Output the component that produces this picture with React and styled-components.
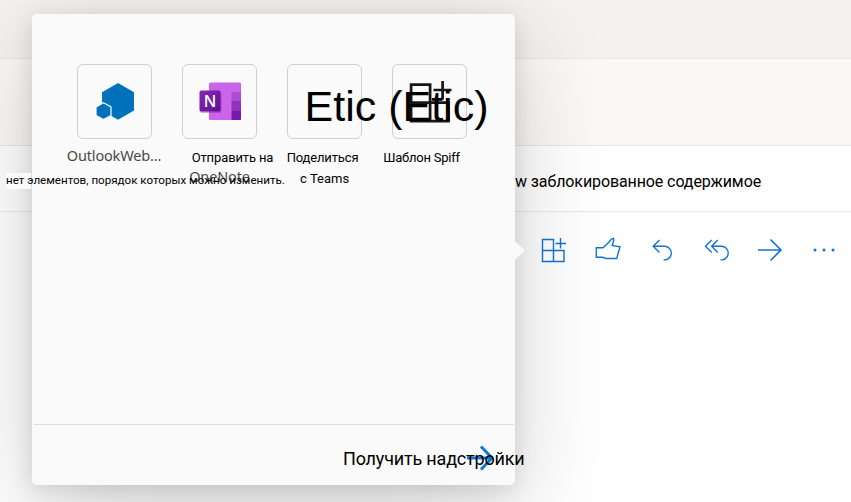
import React from "react";
import styled, { createGlobalStyle } from "styled-components";

const GlobalStyle = createGlobalStyle`
  * { box-sizing: border-box; }
  body { margin: 0; overflow: hidden; background: #fff; }
`;

const Window = styled.main`
  position: relative;
  display: grid;
  grid-template-rows: 59px 87px 66px 1fr;
  width: 851px;
  height: 502px;
  overflow: hidden;
  background: #fff;
  color: #000;
  font-family: Roboto, "Liberation Sans", sans-serif;
`;

const Band = styled.div`
  background: ${(p) => p.$fill};
  border-bottom: 1px solid ${(p) => p.$line};
`;

const Message = styled.div`
  display: flex;
  align-items: center;
  padding: 4px 0 0 515px;
  border-bottom: 1px solid #eaeaea;
`;

const MessageActions = styled.nav`
  display: flex;
  align-items: flex-start;
  gap: 26px;
  padding: 24px 0 0 540px;
`;

const IconButton = styled.button`
  display: flex;
  flex: none;
  width: 28px;
  height: 28px;
  padding: 0;
  border: 0;
  background: none;
  color: #1373d1;
`;

const Glyph = styled.svg`
  display: block;
  width: 28px;
  height: 28px;
  fill: none;
  stroke: currentColor;
  stroke-width: ${(p) => p.$weight || 1.4};
  overflow: visible;
`;

const Popup = styled.section`
  position: absolute;
  left: 32px;
  top: 14px;
  display: flex;
  flex-direction: column;
  width: 483px;
  height: 471px;
  border-radius: 5px;
  background: #fafafa;
  box-shadow: 0 28px 100px rgba(0, 0, 0, 0.18), 0 5px 22px rgba(0, 0, 0, 0.12);
`;

const Pointer = styled.svg`
  position: absolute;
  left: 482px;
  top: 225px;
  width: 11px;
  height: 24px;
`;

const AddinGrid = styled.div`
  display: flex;
  flex: 1;
  padding: 50px 0 0 30px;
`;

const Addin = styled.article`
  display: flex;
  flex-direction: column;
  align-items: center;
  width: 105px;
`;

const Tile = styled.div`
  display: flex;
  align-items: center;
  justify-content: center;
  width: 75px;
  height: 75px;
  border: 1px solid #d0d0d0;
  border-radius: 6px;
`;

const Label = styled.div`
  margin-top: 8px;
  font-size: 13px;
  line-height: 21px;
  text-align: center;
  white-space: nowrap;
`;

const Line = styled.div`
  letter-spacing: ${(p) => p.$track || 0}px;
  transform: translateX(${(p) => p.$shift || 0}px);
`;

const SoftLine = styled(Line)`
  color: #4a4948;
  font-family: "Noto Sans", "Open Sans", sans-serif;
  font-weight: 400;
  font-size: 14.5px;
  line-height: 17px;
`;

const Footer = styled.footer`
  position: relative;
  height: 61px;
  margin: 0 1px 0 2px;
  border-top: 1px solid #dedede;
`;

const FooterArrow = styled.svg`
  position: absolute;
  left: 433px;
  top: 19px;
  width: 28px;
  height: 28px;
  fill: none;
  stroke: #0b7ad8;
  stroke-width: 3;
`;

const FloatingText = styled.span`
  position: absolute;
  left: ${(p) => p.$x}px;
  top: ${(p) => p.$y}px;
  white-space: nowrap;
  font-size: ${(p) => p.$size}px;
  line-height: 1;
  letter-spacing: ${(p) => p.$track || 0}px;
`;

const IconName = styled(FloatingText)`
  font-family: "Liberation Sans", sans-serif;
`;

const Notice = styled(FloatingText)`
  padding: 2px 0;
  background: linear-gradient(90deg, #fafafa 25px, transparent 25px);
`;

const MessageText = styled.span`
  height: 16px;
  background: #fff;
  font-size: 16px;
  line-height: 18px;
  white-space: nowrap;
  letter-spacing: ${(p) => p.$track}px;
`;

const AddinsIcon = () => (
  <Glyph viewBox="0 0 28 28">
    <path d="M2.5 3.5h11v22h-11zM2.5 14.5h21.5v11H2.5M20.5 2v10.5M15.5 7.5H26" />
  </Glyph>
);
const LikeIcon = () => (
  <Glyph viewBox="0 0 28 28">
    <path d="M2.3 11.7H9l6.3-6L17.4 3l2-.6.4 1.9-1.6 5.2 7.8 1.2-3.3 11.8H12l-3.3-1.2H2.3z" />
  </Glyph>
);
const ReplyIcon = () => (
  <Glyph viewBox="0 0 28 28">
    <path d="M11.5 4 5.2 10.3l6.3 6.3M5.5 10.3h10.2a6.8 6.8 0 1 1 0 13.5" />
  </Glyph>
);
const ReplyAllIcon = () => (
  <Glyph viewBox="0 0 28 28">
    <path d="M9.7 4 3.5 10.3l6.2 6.3M15.8 4 9.6 10.3l6.2 6.3M9.9 10.3h8.7a6.8 6.8 0 1 1 0 13.5" />
  </Glyph>
);
const ForwardIcon = () => (
  <Glyph viewBox="0 0 28 28" $weight={1.6}>
    <path d="M2 14h23M14.5 3.5 25 14 14.5 24.5" />
  </Glyph>
);
const MoreIcon = () => (
  <Glyph viewBox="0 0 28 28">
    <g fill="currentColor" stroke="none">
      <circle cx="5" cy="14" r="1.5" />
      <circle cx="14" cy="14" r="1.5" />
      <circle cx="23" cy="14" r="1.5" />
    </g>
  </Glyph>
);

const HexIcon = () => (
  <svg width="44" height="44" viewBox="0 0 44 44">
    <path d="m25 3 16 9.2v18.4l-16 9.2L9 30.6V12.2z" fill="#0072bc" />
    <path d="m10.5 22.7 7.5 4.2v8.5l-7.5 4.2L3 35.4v-8.5z" fill="#0072bc" stroke="#fafafa" strokeWidth="1.2" />
  </svg>
);
const OneNoteIcon = () => (
  <svg width="44" height="44" viewBox="1 1 44 44">
    <defs>
      <linearGradient id="note" x2="1" y2="1">
        <stop stopColor="#8926b7" />
        <stop offset="1" stopColor="#5c1192" />
      </linearGradient>
    </defs>
    <rect x="12" y="3.5" width="32" height="37.5" rx="1.5" fill="#ca64ea" />
    <path d="M34.5 13H44v9h-9.5z" fill="#ae4bd5" />
    <path d="M34.5 22H44v9.5h-9.5z" fill="#9332bf" />
    <path d="M34.5 31.5H44V40a1 1 0 0 1-1 1h-8.5z" fill="#7719aa" />
    <rect x="3.5" y="13" width="21" height="21" rx="1.5" fill="#722094" opacity=".35" />
    <rect x="2.5" y="11.5" width="21" height="21" rx="1.5" fill="url(#note)" />
    <text x="13" y="27.7" textAnchor="middle" fill="#fff" fontFamily="Open Sans, sans-serif" fontWeight="600" fontSize="16">N</text>
  </svg>
);
const SpiffIcon = () => (
  <svg width="44" height="44" viewBox="0 0 44 44" fill="none" stroke="#161616" strokeWidth="2.7">
    <path d="M3.1 4.7h19v36.5h-19zM3.1 22.7h37.4v18.5H3.1" />
    <path d="M34.6 1v18.5M25.5 10h18" />
  </svg>
);

const actions = [
  ["Надстройки", AddinsIcon],
  ["Нравится", LikeIcon],
  ["Ответить", ReplyIcon],
  ["Ответить всем", ReplyAllIcon],
  ["Переслать", ForwardIcon],
  ["Ещё", MoreIcon],
];

export default function App() {
  return (
    <>
      <GlobalStyle />
      <Window>
        <Band $fill="#f3f2f0" $line="#e9e8e7" />
        <Band $fill="#faf9f8" $line="#e8e8e8" />
        <Message>
          <MessageText $track={-0.1}>w заблокированное содержимое</MessageText>
        </Message>
        <MessageActions>
          {actions.map(([name, Icon]) => (
            <IconButton key={name} aria-label={name}><Icon /></IconButton>
          ))}
        </MessageActions>
        <Popup>
          <Pointer viewBox="0 0 11 24">
            <path d="M0 1.5 9.8 10.3q1.2 1.2 0 2.4L0 21.5z" fill="#fafafa" />
          </Pointer>
          <AddinGrid>
            <Addin>
              <Tile><HexIcon /></Tile>
              <Label><SoftLine $shift={-0.5} $track={-0.15}>OutlookWeb...</SoftLine></Label>
            </Addin>
            <Addin>
              <Tile><OneNoteIcon /></Tile>
              <Label>
                <Line $shift={13} $track={-0.12}>Отправить на</Line>
                <SoftLine $track={-0.15}>OneNote</SoftLine>
              </Label>
            </Addin>
            <Addin>
              <Tile />
              <Label>
                <Line $shift={-2} $track={-0.15}>Поделиться</Line>
                <Line>с Teams</Line>
              </Label>
            </Addin>
            <Addin>
              <Tile><SpiffIcon /></Tile>
              <Label><Line $shift={-8} $track={-0.25}>Шаблон Spiff</Line></Label>
            </Addin>
          </AddinGrid>
          <Footer>
            <FooterArrow viewBox="0 0 28 28"><path d="M0 14h24M14 2.5 25 14 14 25.5" /></FooterArrow>
          </Footer>
        </Popup>
        <IconName $x={304.5} $y={85} $size={43}>Etic (Etic)</IconName>
        <Notice $x={6} $y={173} $size={11.6}>нет элементов, порядок которых можно изменить.</Notice>
        <FloatingText $x={343} $y={450} $size={18} $track={-0.18}>Получить надстройки</FloatingText>
      </Window>
    </>
  );
}
